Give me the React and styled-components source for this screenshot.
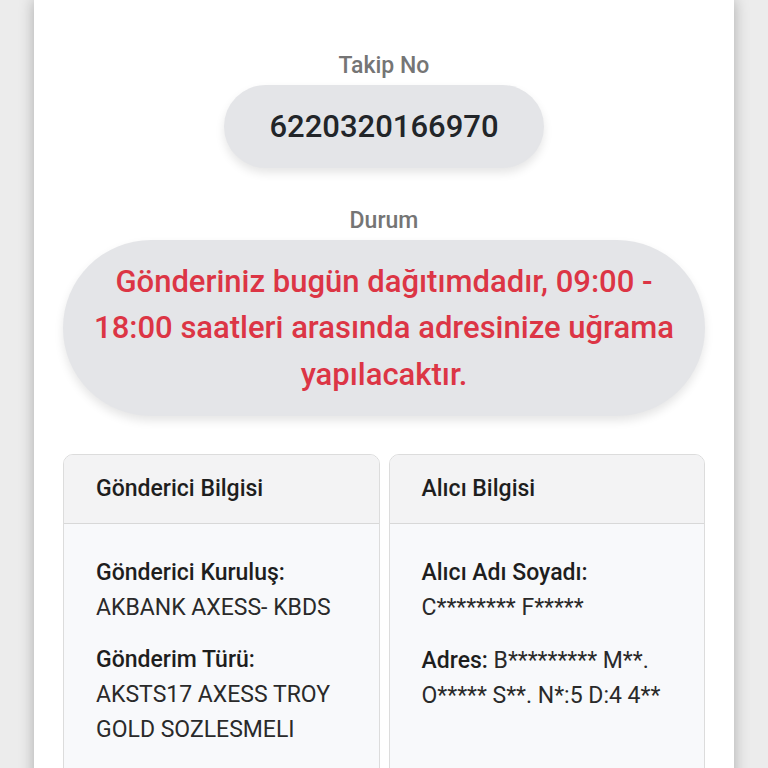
import React from 'react';
import styled, { createGlobalStyle } from 'styled-components';

const GlobalStyle = createGlobalStyle`
    html, body {
        margin: 0;
        padding: 0;
        background: #ececec;
        font-family: Roboto, "Liberation Sans", Arial, sans-serif;
    }
    * {
        box-sizing: border-box;
    }
`;

const App = () => {
    return (
        <>
            <GlobalStyle />
            <Page>
                <Section>
                    <Label>Takip No</Label>
                    <NumberPill>6220320166970</NumberPill>
                </Section>
                <Section>
                    <Label>Durum</Label>
                    <StatusPill>
                        Gönderiniz bugün dağıtımdadır, 09:00 - 18:00 saatleri arasında adresinize uğrama yapılacaktır.
                    </StatusPill>
                </Section>
                <CardRow>
                    <InfoCard>
                        <CardHeader>Gönderici Bilgisi</CardHeader>
                        <CardBody>
                            <Field>
                                <FieldLabel>Gönderici Kuruluş:</FieldLabel>
                                <FieldValue>AKBANK AXESS- KBDS</FieldValue>
                            </Field>
                            <Field>
                                <FieldLabel>Gönderim Türü:</FieldLabel>
                                <FieldValue>AKSTS17 AXESS TROY GOLD SOZLESMELI</FieldValue>
                            </Field>
                        </CardBody>
                    </InfoCard>
                    <InfoCard>
                        <CardHeader>Alıcı Bilgisi</CardHeader>
                        <CardBody>
                            <Field>
                                <FieldLabel>Alıcı Adı Soyadı:</FieldLabel>
                                <FieldValue>C******** F*****</FieldValue>
                            </Field>
                            <Field>
                                <FieldValue>
                                    <Strong>Adres:</Strong> B********* M**. O***** S**. N*:5 D:4 4**
                                </FieldValue>
                            </Field>
                        </CardBody>
                    </InfoCard>
                </CardRow>
            </Page>
        </>
    );
};

const Page = styled.div`
    width: 700px;
    min-height: 800px;
    margin: 0 auto;
    background: #fff;
    box-shadow: 0 0 14px rgba(0, 0, 0, 0.28);
    padding: 51px 29px 0;
    display: flex;
    flex-direction: column;
    align-items: center;
`;

const Section = styled.div`
    width: 100%;
    display: flex;
    flex-direction: column;
    align-items: center;
    margin-bottom: 38px;
`;

const Label = styled.div`
    font-size: 23px;
    line-height: 30px;
    color: #757575;
    font-weight: 500;
    margin-bottom: 4px;
`;

const NumberPill = styled.div`
    width: 320px;
    height: 83px;
    border-radius: 42px;
    background: #e4e5e8;
    box-shadow: 0 5px 10px rgba(0, 0, 0, 0.1);
    display: flex;
    align-items: center;
    justify-content: center;
    font-size: 31px;
    font-weight: 500;
    color: #222529;
`;

const StatusPill = styled.div`
    width: 100%;
    border-radius: 90px;
    background: #e4e5e8;
    box-shadow: 0 5px 10px rgba(0, 0, 0, 0.1);
    padding: 19px 22px 18px;
    text-align: center;
    font-size: 31px;
    line-height: 46.3px;
    font-weight: 500;
    color: #dc3545;
`;

const CardRow = styled.div`
    width: 100%;
    display: grid;
    grid-template-columns: 1fr 1fr;
    gap: 9px;
`;

const InfoCard = styled.div`
    border: 1px solid #dcdcdc;
    border-radius: 10px;
    overflow: hidden;
    background: #f8f9fb;
    min-height: 360px;
`;

const CardHeader = styled.div`
    height: 69px;
    background: #f3f3f4;
    border-bottom: 1px solid #d8d8d8;
    padding: 0 32px;
    display: flex;
    align-items: center;
    font-size: 23px;
    font-weight: 500;
    color: #1e1e1e;
`;

const CardBody = styled.div`
    padding: 32px 32px;
    display: flex;
    flex-direction: column;
    gap: 18px;
`;

const Field = styled.div`
    display: flex;
    flex-direction: column;
`;

const FieldLabel = styled.div`
    font-size: 23px;
    line-height: 34px;
    font-weight: 500;
    color: #1e1e1e;
`;

const Strong = styled.span`
    font-weight: 500;
    color: #1e1e1e;
`;

const FieldValue = styled.div`
    font-size: 23px;
    line-height: 35px;
    color: #2a2a2a;
`;

export default App;
